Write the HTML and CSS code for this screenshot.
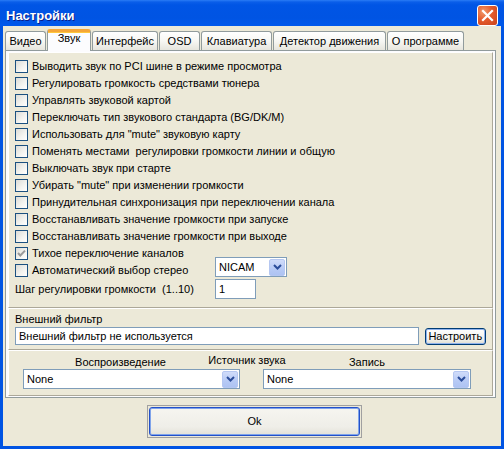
FILE: index.html
```html
<!DOCTYPE html>
<html lang="ru">
<head>
<meta charset="utf-8">
<title>Настройки</title>
<link rel="stylesheet" href="styles.css">
</head>
<body>
<div class="window">
  <div class="titlebar">
    <span class="title">Настройки</span>
    <span class="close"><svg width="13" height="13" viewBox="0 0 13 13"><path d="M2 2 L11 11 M11 2 L2 11" stroke="#fff" stroke-width="2.2" stroke-linecap="square"/></svg></span>
  </div>
  <div class="client">
    <div class="tabs">
      <div class="tab t-video">Видео</div>
      <div class="tab active t-sound">Звук</div>
      <div class="tab t-iface">Интерфейс</div>
      <div class="tab t-osd">OSD</div>
      <div class="tab t-kbd">Клавиатура</div>
      <div class="tab t-motion">Детектор движения</div>
      <div class="tab t-about">О программе</div>
    </div>
    <div class="page">
      <div class="bevel checks">
        <div class="row"><span class="cb"></span><span>Выводить звук по PCI шине в режиме просмотра</span></div>
        <div class="row"><span class="cb"></span><span>Регулировать громкость средствами тюнера</span></div>
        <div class="row"><span class="cb"></span><span>Управлять звуковой картой</span></div>
        <div class="row"><span class="cb"></span><span>Переключать тип звукового стандарта (BG/DK/M)</span></div>
        <div class="row"><span class="cb"></span><span>Использовать для "mute" звуковую карту</span></div>
        <div class="row"><span class="cb"></span><span>Поменять местами&nbsp; регулировки громкости линии и общую</span></div>
        <div class="row"><span class="cb"></span><span>Выключать звук при старте</span></div>
        <div class="row"><span class="cb"></span><span>Убирать "mute" при изменении громкости</span></div>
        <div class="row"><span class="cb"></span><span>Принудительная синхронизация при переключении канала</span></div>
        <div class="row"><span class="cb"></span><span>Восстанавливать значение громкости при запуске</span></div>
        <div class="row"><span class="cb"></span><span>Восстанавливать значение громкости при выходе</span></div>
        <div class="row"><span class="cb checked"><svg width="11" height="11" viewBox="0 0 11 11"><path d="M2 5 L4.3 7.5 L9 2.6" fill="none" stroke="#9a9a9a" stroke-width="2"/></svg></span><span>Тихое переключение каналов</span></div>
        <div class="row stereo"><span class="cb"></span><span class="stereo-label">Автоматический выбор стерео</span>
          <div class="combo nicam"><span class="combo-text">NICAM</span><span class="drop"><svg width="9" height="6" viewBox="0 0 9 6"><path d="M1 1 L4.5 4.5 L8 1" fill="none" stroke="#2b4d9a" stroke-width="2"/></svg></span></div>
        </div>
        <div class="row step"><span class="step-label">Шаг регулировки громкости&nbsp; (1..10)</span><div class="edit small">1</div></div>
      </div>
      <div class="bevel filter">
        <div class="flabel">Внешний фильтр</div>
        <div class="frow">
          <div class="edit wide">Внешний фильтр не используется</div>
          <div class="btn">Настроить</div>
        </div>
      </div>
      <div class="bevel sources">
        <div class="src-grid">
          <span class="l-play">Воспроизведение</span>
          <span class="l-src">Источник звука</span>
          <span class="l-rec">Запись</span>
          <div class="combo c-play"><span class="combo-text">None</span><span class="drop"><svg width="9" height="6" viewBox="0 0 9 6"><path d="M1 1 L4.5 4.5 L8 1" fill="none" stroke="#2b4d9a" stroke-width="2"/></svg></span></div>
          <div class="combo c-rec"><span class="combo-text">None</span><span class="drop"><svg width="9" height="6" viewBox="0 0 9 6"><path d="M1 1 L4.5 4.5 L8 1" fill="none" stroke="#2b4d9a" stroke-width="2"/></svg></span></div>
        </div>
      </div>
    </div>
    <div class="ok-wrap"><div class="ok">Ok</div></div>
  </div>
</div>
</body>
</html>
```
FILE: styles.css
```css
html, body {
  margin: 0;
  padding: 0;
  background: #0054e3;
}
body {
  width: 504px;
  height: 449px;
  overflow: hidden;
  font-family: "Liberation Sans", Arial, sans-serif;
  font-size: 11px;
  line-height: 13px;
  color: #000;
}
.window {
  width: 504px;
  height: 449px;
  display: flex;
  flex-direction: column;
  background: #0054e3;
}
.titlebar {
  height: 26px;
  flex: none;
  display: flex;
  align-items: flex-start;
  padding: 0 6px 0 6px;
  background: linear-gradient(to bottom, #2a7cf6 0px, #0a5ee9 2px, #0055e5 5px, #0054e3 18px, #0058ec 26px);
}
.title {
  margin-top: 8px;
  color: #fff;
  font-weight: bold;
  font-size: 13px;
  line-height: 16px;
  text-shadow: 1px 1px 0 #0a1e8a;
}
.close {
  margin-left: auto;
  margin-top: 5px;
  width: 19px;
  height: 19px;
  border: 1px solid #fff;
  border-radius: 3px;
  background: radial-gradient(circle at 30% 30%, #f09a6c 0, #e45a2c 45%, #c8421c 100%);
  display: flex;
  align-items: center;
  justify-content: center;
}
.client {
  flex: 1;
  margin: 0 3px 3px 3px;
  padding: 3px 0 0 2px;
  background: #ece9d8;
}
.tabs {
  display: flex;
  align-items: flex-end;
  height: 21px;
}
.tab {
  box-sizing: border-box;
  height: 19px;
  margin-right: 1px;
  border: 1px solid #919b9c;
  border-bottom: none;
  border-radius: 3px 3px 0 0;
  padding-top: 3px;
  text-align: center;
  background: linear-gradient(to bottom, #ffffff 0%, #f7f7f3 50%, #e6e5dd 100%);
  white-space: nowrap;
}
.tab.active {
  height: 22px;
  margin-bottom: -1px;
  position: relative;
  z-index: 2;
  padding-top: 0;
  border-top: 3px solid #f5a637;
  border-radius: 3px 3px 0 0;
  background: #fcfcfe;
  box-shadow: inset 0 1px 0 #ffc73c;
}
.t-video { width: 41px; }
.t-sound { width: 44px; }
.t-iface { width: 66px; }
.t-osd { width: 41px; }
.t-kbd { width: 71px; }
.t-motion { width: 113px; }
.t-about { width: 77px; }
.page {
  box-sizing: border-box;
  width: 491px;
  border: 1px solid #919b9c;
  padding: 1px 2px;
  background: #fcfcfe;
}
.bevel {
  border: 1px solid;
  border-color: #ffffff #aca899 #aca899 #ffffff;
  background: #ece9d8;
}
.checks {
  height: 256px;
  box-sizing: border-box;
  padding: 5px 6px 0 6px;
}
.row {
  height: 17px;
  display: flex;
  align-items: center;
  white-space: nowrap;
}
.cb {
  box-sizing: border-box;
  width: 13px;
  height: 13px;
  flex: none;
  margin-right: 4px;
  border: 1px solid #1c5180;
  background: linear-gradient(135deg, #dcdcd7 0%, #f4f4f0 60%, #ffffff 100%);
  display: flex;
  align-items: center;
  justify-content: center;
}
.stereo-label {
  width: 183px;
  flex: none;
}
.stereo .combo {
  align-self: flex-start;
  margin-top: -5px;
}
.step {
  height: 20px;
}
.step-label {
  width: 200px;
  flex: none;
}
.combo {
  box-sizing: border-box;
  height: 20px;
  border: 1px solid #7f9db9;
  background: #fff;
  display: flex;
  align-items: center;
  padding: 1px;
}
.combo-text {
  flex: 1;
  padding-left: 2px;
}
.drop {
  width: 16px;
  height: 17px;
  flex: none;
  box-sizing: border-box;
  border-radius: 2px;
  background: linear-gradient(to bottom, #d0dcfa 0%, #b7caf5 60%, #aec3f3 100%);
  border: 1px solid #b5c7f1;
  display: flex;
  align-items: center;
  justify-content: center;
}
.nicam { width: 72px; }
.edit {
  box-sizing: border-box;
  border: 1px solid #7f9db9;
  background: #fff;
  padding-left: 3px;
  display: flex;
  align-items: center;
}
.edit.small {
  width: 41px;
  height: 20px;
}
.filter {
  height: 42px;
  box-sizing: border-box;
  padding: 4px 6px 0 6px;
}
.frow {
  display: flex;
  margin-top: 1px;
  align-items: flex-start;
}
.edit.wide {
  width: 407px;
  height: 18px;
}
.btn {
  box-sizing: border-box;
  width: 62px;
  height: 17px;
  margin-left: 6px;
  margin-top: 1px;
  border: 1px solid #003c74;
  border-radius: 3px;
  background: linear-gradient(to bottom, #ffffff 0%, #f1f0ea 70%, #dedcd1 100%);
  box-shadow: inset 0 0 0 1px #8fb2ec;
  display: flex;
  align-items: center;
  justify-content: center;
}
.sources {
  height: 46px;
  box-sizing: border-box;
  padding: 5px 0 0 14px;
}
.src-grid {
  display: grid;
  grid-template-columns: 217px 23px 208px;
  grid-template-rows: 13px 20px;
}
.l-play {
  grid-column: 1;
  grid-row: 1;
  justify-self: center;
  padding-right: 22px;
}
.l-src {
  grid-column: 1 / 4;
  grid-row: 1;
  justify-self: center;
  margin-top: -2px;
}
.l-rec {
  grid-column: 3;
  grid-row: 1;
  justify-self: center;
}
.c-play { grid-column: 1; grid-row: 2; }
.c-rec { grid-column: 3; grid-row: 2; }
.ok-wrap {
  box-sizing: border-box;
  width: 215px;
  height: 33px;
  margin: 7px 0 0 142px;
  border: 1px solid #a0a0a0;
  padding: 1px;
}
.ok {
  box-sizing: border-box;
  height: 100%;
  border: 1px solid #2451c9;
  border-radius: 3px;
  box-shadow: inset 0 0 0 1px #7fa3ea;
  background: linear-gradient(to bottom, #f6f5f0 0%, #efeee8 70%, #e4e2d8 100%);
  display: flex;
  align-items: center;
  justify-content: center;
}
```
